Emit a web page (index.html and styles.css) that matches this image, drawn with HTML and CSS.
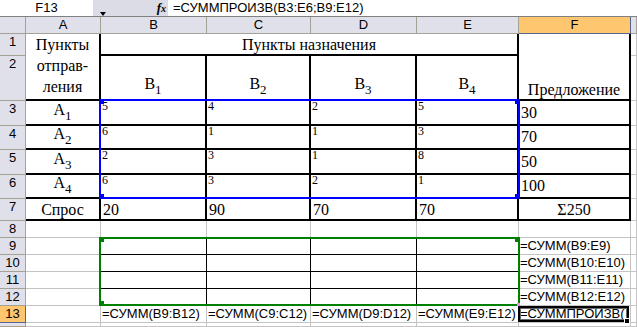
FILE: index.html
```html
<!DOCTYPE html>
<html lang="ru">
<head>
<meta charset="utf-8">
<title>Excel</title>
<link rel="stylesheet" href="styles.css">
</head>
<body>
<div class="fbar">
  <div class="namebox">F13</div>
  <div class="fbtns"><span class="dd"></span><span class="fx"><span class="fx-f">f</span><span class="fx-x">x</span></span></div>
  <div class="formula">=СУММПРОИЗВ(B3:E6;B9:E12)</div>
</div>
<div class="sheet">
  <!-- header row -->
  <div class="h"></div>
  <div class="h">A</div>
  <div class="h">B</div>
  <div class="h">C</div>
  <div class="h">D</div>
  <div class="h">E</div>
  <div class="h hsel">F</div>
  <div class="h"></div>

  <!-- row 1 -->
  <div class="h">1</div>
  <div class="c t serif a12">Пункты<br>отправ-<br>ления</div>
  <div class="c t serif ctr bot b1e1">Пункты назначения</div>
  <div class="c t serif ctr bot f12">Предложение</div>
  <div class="c"></div>

  <!-- row 2 -->
  <div class="h">2</div>
  <div class="c t serif ctr bot pb4"><span>B<span class="sub">1</span></span></div>
  <div class="c t serif ctr bot pb4"><span>B<span class="sub">2</span></span></div>
  <div class="c t serif ctr bot pb4"><span>B<span class="sub">3</span></span></div>
  <div class="c t serif ctr bot pb4"><span>B<span class="sub">4</span></span></div>
  <div class="c"></div>

  <!-- row 3 -->
  <div class="h">3</div>
  <div class="c t serif ctr bot pb3"><span>A<span class="sub">1</span></span></div>
  <div class="c t small">5</div>
  <div class="c t small">4</div>
  <div class="c t small">2</div>
  <div class="c t small">5</div>
  <div class="c t serif bot pb2 pl">30</div>
  <div class="c"></div>

  <!-- row 4 -->
  <div class="h">4</div>
  <div class="c t serif ctr bot pb3"><span>A<span class="sub">2</span></span></div>
  <div class="c t small">6</div>
  <div class="c t small">1</div>
  <div class="c t small">1</div>
  <div class="c t small">3</div>
  <div class="c t serif bot pb2 pl">70</div>
  <div class="c"></div>

  <!-- row 5 -->
  <div class="h">5</div>
  <div class="c t serif ctr bot pb3"><span>A<span class="sub">3</span></span></div>
  <div class="c t small">2</div>
  <div class="c t small">3</div>
  <div class="c t small">1</div>
  <div class="c t small">8</div>
  <div class="c t serif bot pb2 pl">50</div>
  <div class="c"></div>

  <!-- row 6 -->
  <div class="h">6</div>
  <div class="c t serif ctr bot pb3"><span>A<span class="sub">4</span></span></div>
  <div class="c t small">6</div>
  <div class="c t small">3</div>
  <div class="c t small">2</div>
  <div class="c t small">1</div>
  <div class="c t serif bot pb2 pl">100</div>
  <div class="c"></div>

  <!-- row 7 -->
  <div class="h">7</div>
  <div class="c t serif ctr bot">Спрос</div>
  <div class="c t serif bot pl">20</div>
  <div class="c t serif bot pl">90</div>
  <div class="c t serif bot pl">70</div>
  <div class="c t serif bot pl">70</div>
  <div class="c t serif ctr bot">Σ250</div>
  <div class="c"></div>

  <!-- row 8 -->
  <div class="h">8</div>
  <div class="c"></div><div class="c"></div><div class="c"></div><div class="c"></div><div class="c"></div><div class="c"></div><div class="c"></div>

  <!-- row 9 -->
  <div class="h">9</div>
  <div class="c"></div>
  <div class="c k"></div><div class="c k"></div><div class="c k"></div><div class="c k"></div>
  <div class="c f">=СУММ(B9:E9)</div>
  <div class="c"></div>

  <!-- row 10 -->
  <div class="h">10</div>
  <div class="c"></div>
  <div class="c k"></div><div class="c k"></div><div class="c k"></div><div class="c k"></div>
  <div class="c f">=СУММ(B10:E10)</div>
  <div class="c"></div>

  <!-- row 11 -->
  <div class="h">11</div>
  <div class="c"></div>
  <div class="c k"></div><div class="c k"></div><div class="c k"></div><div class="c k"></div>
  <div class="c f">=СУММ(B11:E11)</div>
  <div class="c"></div>

  <!-- row 12 -->
  <div class="h">12</div>
  <div class="c"></div>
  <div class="c k"></div><div class="c k"></div><div class="c k"></div><div class="c k"></div>
  <div class="c f">=СУММ(B12:E12)</div>
  <div class="c"></div>

  <!-- row 13 -->
  <div class="h hsel">13</div>
  <div class="c"></div>
  <div class="c f">=СУММ(B9:B12)</div>
  <div class="c f">=СУММ(C9:C12)</div>
  <div class="c f">=СУММ(D9:D12)</div>
  <div class="c f">=СУММ(E9:E12)</div>
  <div class="c f clip"><span class="edit">=СУММПРОИЗВ(</span><span class="caret"></span></div>
  <div class="c"></div>

  <!-- row 14 (only its top edge is in view) -->
  <div class="h"></div>
  <div class="c"></div><div class="c"></div><div class="c"></div><div class="c"></div><div class="c"></div><div class="c"></div><div class="c"></div>

  <!-- overlays: reference highlights and the active cell -->
  <div class="range range-blue">
    <span class="sq tl"></span><span class="sq tr"></span><span class="sq bl"></span><span class="sq br"></span>
  </div>
  <div class="range range-green">
    <span class="sq tl"></span><span class="sq tr"></span><span class="sq bl"></span><span class="sq br pink"></span>
  </div>
  <div class="active"><span class="handle"></span></div>
</div>
</body>
</html>
```
FILE: styles.css
```css
* { box-sizing: border-box; margin: 0; padding: 0; }

body {
  margin: 0;
  width: 637px;
  height: 327px;
  overflow: hidden;
  background: #fff;
  color: #000;
  font-family: "Liberation Sans", Arial, sans-serif;
  font-size: 13px;
}

/* formula bar */
.fbar {
  display: flex;
  height: 17px;
  border-bottom: 1px solid #808080;
  background: #dcdce6;
}
.namebox {
  width: 93px;
  background: #fff;
  text-align: center;
  line-height: 16px;
}
.fbtns {
  width: 75px;
  display: flex;
  padding-left: 7px;
  padding-right: 2px;
}
.dd {
  width: 0;
  height: 0;
  margin-top: 12px;
  border-left: 3.5px solid transparent;
  border-right: 3.5px solid transparent;
  border-top: 4px solid #000;
}
.fx {
  margin-left: auto;
  font-family: "Liberation Serif", "Times New Roman", serif;
  font-weight: bold;
  font-style: italic;
  line-height: 15px;
  white-space: nowrap;
}
.fx-f { font-size: 13px; }
.fx-x { font-size: 10px; }
.formula {
  flex: 1;
  background: #fff;
  padding-left: 5px;
  line-height: 16px;
  white-space: nowrap;
  overflow: hidden;
}

/* sheet grid */
.sheet {
  position: relative;
  display: grid;
  grid-template-columns: 26px 75px 106px 104px 106px 102px 112px 1fr;
  grid-template-rows: 17px 22px 45px 25px 24px 25px 24px 22px 17px 17px 17px 17px 17px 17px 1fr;
  height: 310px;
}

.h {
  background: #e0e0ea;
  border-right: 1px solid #a3a294;
  border-bottom: 1px solid #a3a294;
  text-align: center;
  line-height: 16px;
  overflow: hidden;
}
.hsel {
  background: #ffc670;
  border-right-color: #56658f;
  border-bottom-color: #56658f;
}

.c {
  display: flex;
  border-right: 1px solid #c4c4c4;
  border-bottom: 1px solid #c4c4c4;
  white-space: nowrap;
}
.t {
  border-right: 2px solid #000;
  border-bottom: 2px solid #000;
}
.k {
  border-right-color: #000;
  border-bottom-color: #000;
}

.serif {
  font-family: "Liberation Serif", "Times New Roman", serif;
  font-size: 16px;
  line-height: 19px;
}
.ctr { justify-content: center; }
.bot { align-items: flex-end; }
.pb2 { padding-bottom: 2px; }
.pb3 { padding-bottom: 3px; }
.pb4 { padding-bottom: 4px; }
.pl { padding-left: 2px; }

.a12 {
  grid-row: span 2;
  flex-direction: column;
  align-items: center;
  text-align: center;
  line-height: 21px;
}
.b1e1 { grid-column: span 4; }
.f12 { grid-row: span 2; }

.sub {
  font-size: 13px;
  line-height: 10px;
  vertical-align: -5px;
}

.small {
  font-family: "Liberation Serif", "Times New Roman", serif;
  font-size: 12px;
  line-height: 10px;
  padding-left: 1px;
  align-items: flex-start;
}

.f {
  padding-left: 1px;
  line-height: 16px;
}
.clip { overflow: hidden; }
.edit { white-space: nowrap; }
.caret {
  flex: none;
  width: 3px;
  height: 12px;
  margin: 2px 0 0 1px;
  border: 1px solid #0000ff;
  border-right: none;
}

/* overlays */
.range {
  position: absolute;
  border: 2px solid;
}
.range-blue {
  grid-area: 4 / 3 / 8 / 7;
  top: -2px; left: -2px; right: -1px; bottom: 0;
  border-color: #0000ff;
  color: #0000ff;
}
.range-green {
  grid-area: 10 / 3 / 14 / 7;
  top: -1px; left: -2px; right: -1px; bottom: 0;
  border-color: #008000;
  color: #008000;
}
.sq {
  position: absolute;
  width: 5px;
  height: 5px;
  background: currentColor;
}
.sq.tl { top: -2px; left: -2px; }
.sq.tr { top: -2px; right: -2px; }
.sq.bl { bottom: -2px; left: -2px; }
.sq.br { bottom: -2px; right: -2px; }
.sq.pink { background: #ff80ff; width: 3px; height: 3px; bottom: -2px; right: -2px; }

.active {
  position: absolute;
  grid-area: 14 / 7 / 15 / 8;
  top: 0; left: -1px; right: 2px; bottom: 1px;
  border: 2px solid #000;
  box-shadow: inset 0 0 0 1px #6a6a6a;
}
.handle {
  position: absolute;
  right: -3px;
  bottom: -4px;
  width: 6px;
  height: 6px;
  background: #000;
  border: 1px solid #fff;
}
```
